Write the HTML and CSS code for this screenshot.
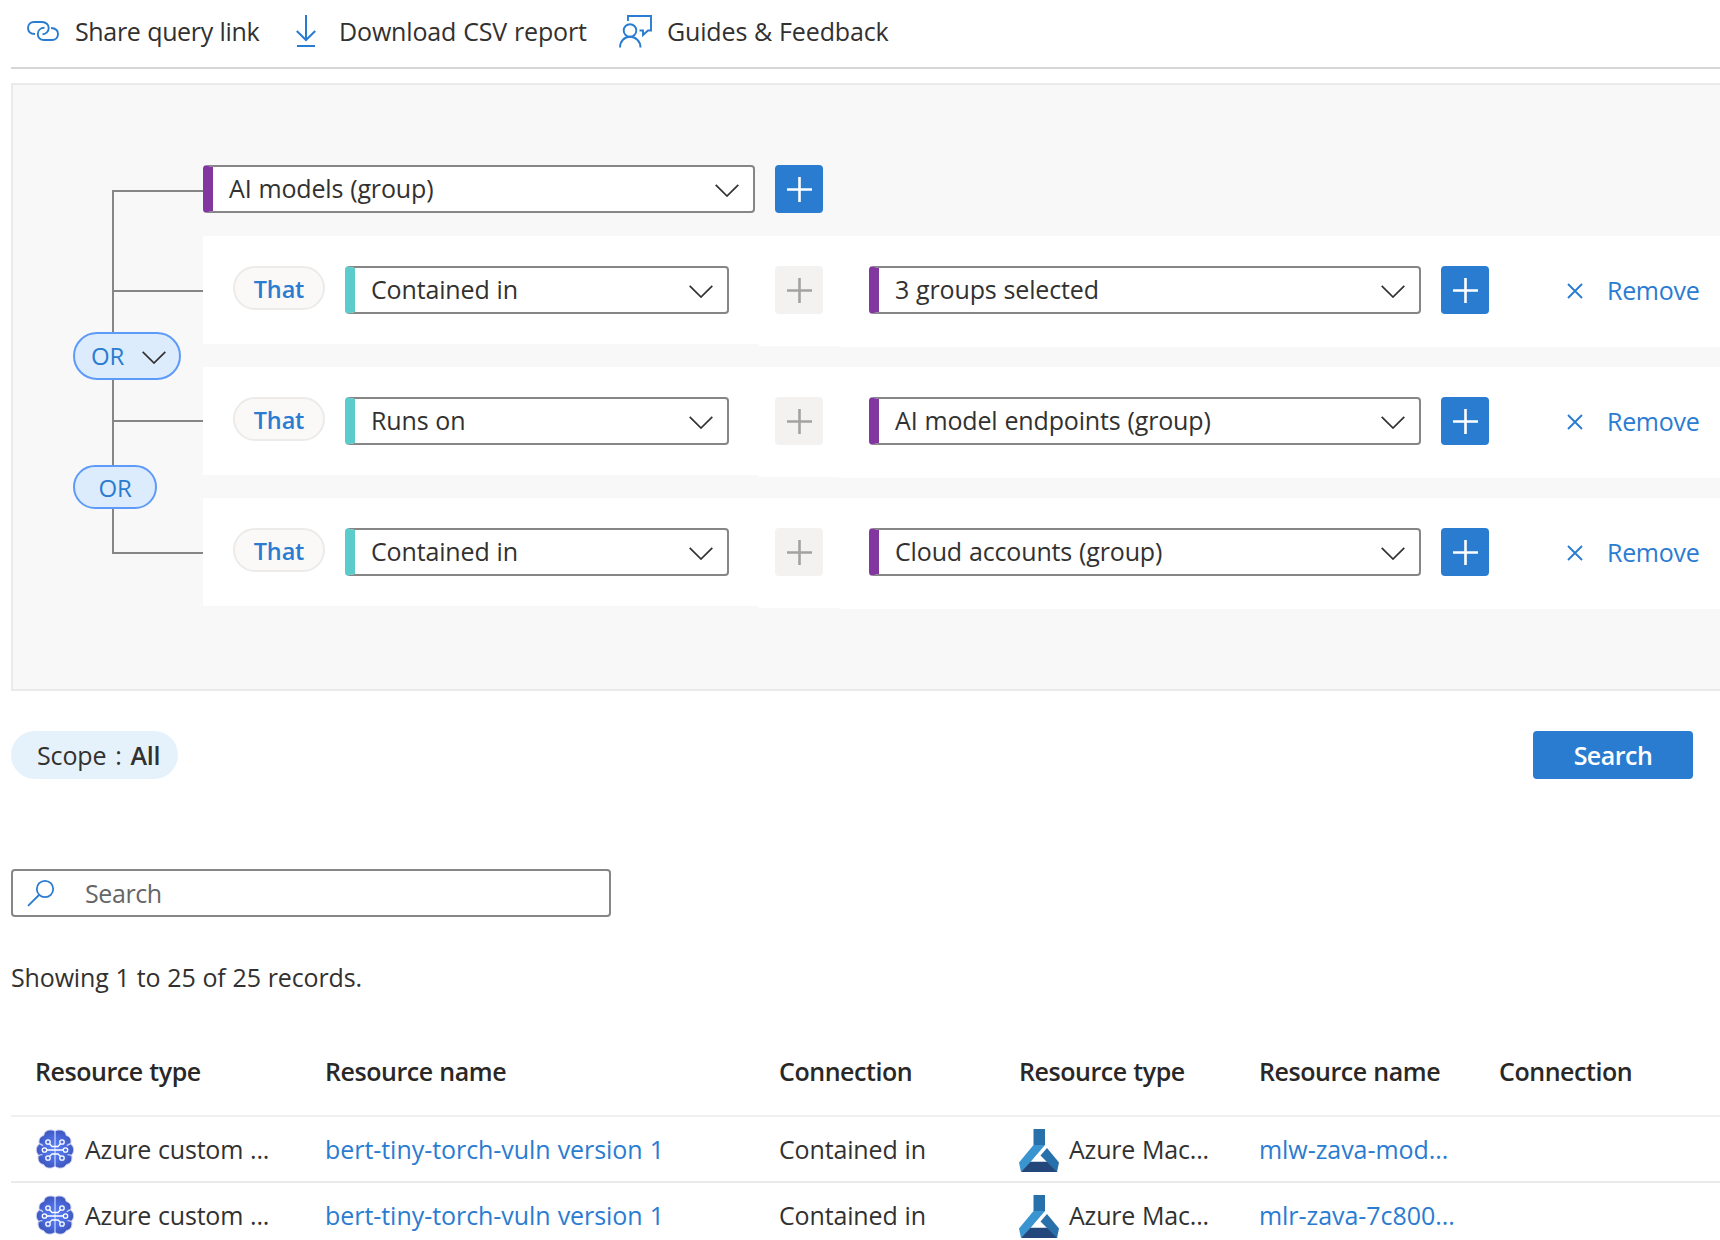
FILE: index.html
```html
<!DOCTYPE html>
<html lang="en">
<head>
    <meta charset="UTF-8">
    <meta name="viewport" content="width=device-width, initial-scale=1.0">
    <title>Cloud Security Explorer</title>
    <link rel="stylesheet" href="styles.css">
</head>
<body>
    <!-- Shared icons -->
    <svg class="sprite" width="0" height="0">
        <defs>
            <radialGradient id="brain-fill" cx="50%" cy="50%" r="60%">
                <stop offset="0" stop-color="#5c80f5"/>
                <stop offset="0.5" stop-color="#4a6be0"/>
                <stop offset="1" stop-color="#3a4fb0"/>
            </radialGradient>
        </defs>
        <symbol id="chevron" viewBox="0 0 24 13">
            <path d="M.7 .9 12 12 23.300 .9" fill="none" stroke="#323130" stroke-width="1.7"/>
        </symbol>
        <symbol id="plus" viewBox="0 0 26 26">
            <path d="M13.500 1V26M1 13.500H26" fill="none" stroke="currentColor" stroke-width="2.600"/>
        </symbol>
        <symbol id="cross" viewBox="0 0 16 16">
            <path d="M1 1 15 15M15 1 1 15" fill="none" stroke="currentColor" stroke-width="1.900"/>
        </symbol>
        <symbol id="brain" viewBox="0 0 40 40">
            <path d="M19 1.500C14 .2 9.500 1.500 8.800 6.500 5 7.500 3 11 4.500 15 .8 17 .3 23 3.500 26 2 31 4.500 35 8.500 35.500 10.500 39.800 17 40 19.300 37.500L20 37.500 20.700 37.500C23 40 29.500 39.800 31.500 35.500 35.500 35 38 31 36.500 26 39.700 23 39.200 17 35.500 15 37 11 35 7.500 31.200 6.500 30.500 1.500 26 .2 21 1.500L20 2.500Z" fill="url(#brain-fill)" stroke="#c9d0ef" stroke-width="1"/>
            <path d="M20 2V38" stroke="#b5c2f7" stroke-width="1.500"/>
            <g fill="none" stroke="#fff" stroke-width="1.300">
                <path d="M11.500 21H28.500M14.500 14.800 17 17.500H23L25.500 14.800M14.500 27.200 17 25H23L25.500 27.200"/>
                <path d="M4.500 15C6 15 7.500 16 8 17M35.500 15C34 15 32.500 16 32 17M3.500 27C5 25.500 6.500 25.500 7.500 26M36.500 27C35 25.500 33.500 25.500 32.500 26" stroke="#c9d0ef"/>
                <circle cx="9.500" cy="21" r="2.200"/><circle cx="30.500" cy="21" r="2.200"/>
                <circle cx="13" cy="13" r="2.200"/><circle cx="27" cy="13" r="2.200"/>
                <circle cx="13" cy="29" r="2.200"/><circle cx="27" cy="29" r="2.200"/>
            </g>
        </symbol>
        <symbol id="flask" viewBox="0 0 40 43">
            <path d="M14.500 0H26V16H14.500Z" fill="#2870aa"/>
            <path d="M10 32.800H30L38.500 43H2Z" fill="#24477b"/>
            <path d="M14.500 16H26L11 33.500 2 43 0 33.500Z" fill="#3a94d0"/>
            <path d="M28 19 40 33.500 38 43 21.500 26.500Z" fill="#2870aa"/>
        </symbol>
    </svg>

    <header class="toolbar">
        <button class="command command-share">
            <svg width="34" height="22" viewBox="0 0 34 22" fill="none" stroke="#2a7cd1" stroke-width="1.900">
                <path d="M9 14C4 13.800 2 11 2 8 2 4.500 4.500 2 8 2H16C20 2 22.700 4.700 22.700 8 22.700 11.500 20 14.200 16.500 14.200"/>
                <path d="M25 8C30 8.200 32 11 32 14 32 17.500 29.500 20 26 20H18C14 20 11.800 17.300 11.800 14 11.800 10.500 14.500 7.800 18.500 7.800"/>
            </svg>
            <span>Share query link</span>
        </button>
        <button class="command command-download">
            <svg width="20" height="32" viewBox="0 0 20 32" fill="none" stroke="#2a7cd1" stroke-width="2">
                <path d="M10 0V25M.8 16 10 25 19.200 16M1 31H19"/>
            </svg>
            <span>Download CSV report</span>
        </button>
        <button class="command command-guides">
            <svg width="33" height="33" viewBox="0 0 33 33" fill="none" stroke="#2a7cd1" stroke-width="1.900">
                <path d="M9 6V1H32V15.500H29L24 20V15.500H20.500"/>
                <circle cx="11" cy="15.500" r="6.300"/>
                <path d="M1 32.500C1 26 5.500 21.800 11 21.800S21.500 26 21.500 32.500"/>
            </svg>
            <span>Guides &amp; Feedback</span>
        </button>
    </header>

    <section class="builder">
        <div class="tree">
            <svg class="tree-lines" width="190" height="400" fill="none" stroke="#868686" stroke-width="2">
                <path d="M190 26H100V388H190M100 126H190M100 256H190"/>
            </svg>
            <button class="operator operator-main">OR <svg width="24" height="13"><use href="#chevron"/></svg></button>
            <div class="operator operator-sub">OR</div>
        </div>

        <div class="query">
            <div class="query-root">
                <button class="select select-wide entity"><span>AI models (group)</span><svg width="24" height="13"><use href="#chevron"/></svg></button>
                <button class="add"><svg width="26" height="26"><use href="#plus"/></svg></button>
            </div>

            <div class="condition">
                <div class="cell cell-relation">
                    <span class="that">That</span>
                    <button class="select select-narrow relation"><span>Contained in</span><svg width="24" height="13"><use href="#chevron"/></svg></button>
                </div>
                <div class="cell cell-add"><button class="add" disabled><svg width="26" height="26"><use href="#plus"/></svg></button></div>
                <div class="cell cell-target">
                    <button class="select select-wide entity"><span>3 groups selected</span><svg width="24" height="13"><use href="#chevron"/></svg></button>
                    <button class="add"><svg width="26" height="26"><use href="#plus"/></svg></button>
                    <a class="remove"><svg width="16" height="16"><use href="#cross"/></svg>Remove</a>
                </div>
            </div>

            <div class="condition">
                <div class="cell cell-relation">
                    <span class="that">That</span>
                    <button class="select select-narrow relation"><span>Runs on</span><svg width="24" height="13"><use href="#chevron"/></svg></button>
                </div>
                <div class="cell cell-add"><button class="add" disabled><svg width="26" height="26"><use href="#plus"/></svg></button></div>
                <div class="cell cell-target">
                    <button class="select select-wide entity"><span>AI model endpoints (group)</span><svg width="24" height="13"><use href="#chevron"/></svg></button>
                    <button class="add"><svg width="26" height="26"><use href="#plus"/></svg></button>
                    <a class="remove"><svg width="16" height="16"><use href="#cross"/></svg>Remove</a>
                </div>
            </div>

            <div class="condition">
                <div class="cell cell-relation">
                    <span class="that">That</span>
                    <button class="select select-narrow relation"><span>Contained in</span><svg width="24" height="13"><use href="#chevron"/></svg></button>
                </div>
                <div class="cell cell-add"><button class="add" disabled><svg width="26" height="26"><use href="#plus"/></svg></button></div>
                <div class="cell cell-target">
                    <button class="select select-wide entity"><span>Cloud accounts (group)</span><svg width="24" height="13"><use href="#chevron"/></svg></button>
                    <button class="add"><svg width="26" height="26"><use href="#plus"/></svg></button>
                    <a class="remove"><svg width="16" height="16"><use href="#cross"/></svg>Remove</a>
                </div>
            </div>
        </div>
    </section>

    <div class="actions">
        <button class="scope">Scope : <b>All</b></button>
        <button class="run">Search</button>
    </div>

    <label class="filter">
        <svg width="28" height="28" viewBox="0 0 28 28" fill="none" stroke="#2a7cd1" stroke-width="1.800">
            <circle cx="18" cy="10" r="8.200"/>
            <path d="M12 16 1 26.800"/>
        </svg>
        <input type="text" placeholder="Search">
    </label>

    <p class="summary">Showing 1 to 25 of 25 records.</p>

    <table class="results">
        <colgroup>
            <col class="col-type"><col class="col-name"><col class="col-std"><col class="col-std"><col class="col-std"><col>
        </colgroup>
        <thead>
            <tr>
                <th>Resource type</th>
                <th>Resource name</th>
                <th>Connection</th>
                <th>Resource type</th>
                <th>Resource name</th>
                <th>Connection</th>
            </tr>
        </thead>
        <tbody>
            <tr>
                <td><div class="resource"><svg width="40" height="40"><use href="#brain"/></svg><span>Azure custom ...</span></div></td>
                <td><a>bert-tiny-torch-vuln version 1</a></td>
                <td>Contained in</td>
                <td><div class="resource"><svg class="flask" width="40" height="43"><use href="#flask"/></svg><span>Azure Mac...</span></div></td>
                <td><a>mlw-zava-mod...</a></td>
                <td></td>
            </tr>
            <tr>
                <td><div class="resource"><svg width="40" height="40"><use href="#brain"/></svg><span>Azure custom ...</span></div></td>
                <td><a>bert-tiny-torch-vuln version 1</a></td>
                <td>Contained in</td>
                <td><div class="resource"><svg class="flask" width="40" height="43"><use href="#flask"/></svg><span>Azure Mac...</span></div></td>
                <td><a>mlr-zava-7c800...</a></td>
                <td></td>
            </tr>
        </tbody>
    </table>
</body>
</html>
```
FILE: styles.css
```css
:root {
    --blue: #2a7cd1;
    --text: #323130;
    --border: #868686;
    --purple: #8236a0;
    --teal: #5bcbcb;
}

* {
    margin: 0;
    padding: 0;
    box-sizing: border-box;
}

body {
    height: 1240px;
    padding-left: 11px;
    overflow: hidden;
    background: #fff;
    color: var(--text);
    font-family: 'Segoe UI', 'Open Sans', 'Noto Sans', sans-serif;
    font-size: 25px;
    line-height: 34px;
    letter-spacing: -0.15px;
    word-spacing: 0.6px;
}

button,
input {
    font: inherit;
    letter-spacing: inherit;
    word-spacing: inherit;
    color: inherit;
    background: none;
    border: none;
}

svg {
    display: block;
    flex-shrink: 0;
}

a {
    color: var(--blue);
}

.sprite {
    position: absolute;
}

/* Toolbar */
.toolbar {
    display: flex;
    height: 69px;
    padding: 0 0 5px 15px;
    border-bottom: 2px solid #d6d6d6;
}

.command {
    display: flex;
    align-items: center;
    white-space: nowrap;
}

.command-share {
    width: 270px;
    gap: 15px;
    letter-spacing: -0.35px;
}

.command-download {
    width: 323px;
    gap: 23px;
}

.command-guides {
    gap: 15px;
}

/* Query builder */
.builder {
    display: flex;
    height: 608px;
    margin-top: 14px;
    padding-top: 80px;
    background: #f8f8f8;
    border: 2px solid #eaeaea;
    border-right: none;
}

.tree {
    position: relative;
    width: 190px;
    flex-shrink: 0;
}

.operator {
    position: absolute;
    left: 60px;
    display: flex;
    align-items: center;
    background: #dcecfc;
    border: 2px solid #5e9bf8;
    border-radius: 24px;
    color: var(--blue);
    font-size: 24px;
}

.operator-main {
    top: 167px;
    width: 108px;
    height: 48px;
    padding: 0 13px 0 16px;
    justify-content: space-between;
}

.operator-main svg {
    margin-top: 3px;
}

.operator-sub {
    top: 300px;
    width: 84px;
    height: 44px;
    padding-top: 2px;
    justify-content: center;
}

.query {
    flex: 1;
}

.query-root {
    display: flex;
    gap: 20px;
    margin-bottom: 23px;
}

.select {
    display: flex;
    align-items: center;
    justify-content: space-between;
    height: 48px;
    padding: 0 14px 0 16px;
    background: #fff;
    border: 2px solid var(--border);
    border-left-width: 10px;
    border-radius: 4px;
}

.select span {
    padding-bottom: 2px;
}

.select svg {
    margin-top: 2px;
}

.select-wide {
    width: 552px;
}

.select-narrow {
    width: 384px;
}

.entity {
    border-left-color: var(--purple);
}

.relation {
    border-left-color: var(--teal);
}

.add {
    display: grid;
    place-items: center;
    width: 48px;
    height: 48px;
    background: var(--blue);
    border-radius: 4px;
    color: #fff;
}

.add:disabled {
    background: #f3f2f1;
    color: #a4a2a0;
}

.condition {
    display: flex;
    align-items: flex-start;
    margin-bottom: 20px;
}

.cell {
    display: flex;
    align-items: flex-start;
    padding-top: 30px;
    background: #fff;
}

.cell-relation {
    width: 556px;
    height: 108px;
    padding-left: 30px;
    gap: 20px;
}

.cell-add {
    width: 80px;
    height: 110px;
    padding-left: 16px;
}

.cell-target {
    flex: 1;
    height: 111px;
    padding-left: 30px;
    gap: 20px;
}

.that {
    display: grid;
    place-items: center;
    width: 92px;
    height: 44px;
    padding-top: 2px;
    background: #faf9f8;
    border: 2px solid #edebe9;
    border-radius: 22px;
    color: var(--blue);
    font-weight: 600;
    font-size: 23.5px;
}

.remove {
    display: flex;
    align-items: center;
    gap: 24px;
    height: 48px;
    margin-left: 58px;
    letter-spacing: -0.3px;
}

.remove svg {
    margin-top: 2px;
}

/* Scope and search */
.actions {
    display: flex;
    justify-content: space-between;
    margin: 40px 27px 90px 0;
}

.scope {
    width: 167px;
    height: 48px;
    padding: 0 0 1px 26px;
    background: #e6f2fb;
    border-radius: 24px;
    text-align: left;
    white-space: nowrap;
    word-spacing: 2.5px;
}

.scope b {
    font-weight: 600;
}

.run {
    width: 160px;
    height: 48px;
    background: var(--blue);
    border-radius: 4px;
    color: #fff;
    font-weight: 600;
    letter-spacing: -0.5px;
}

.filter {
    display: flex;
    align-items: center;
    gap: 30px;
    width: 600px;
    height: 48px;
    padding-left: 14px;
    border: 2px solid var(--border);
    border-radius: 4px;
}

.filter input {
    outline: none;
}

.filter input::placeholder {
    color: #666;
    letter-spacing: -0.4px;
}

.summary {
    margin-top: 43px;
}

/* Results */
.results {
    width: 1709px;
    margin-top: 33px;
    table-layout: fixed;
    border-collapse: separate;
    border-spacing: 0;
}

.col-type {
    width: 290px;
}

.col-name {
    width: 454px;
}

.col-std {
    width: 240px;
}

.results th,
.results td {
    padding-left: 24px;
    text-align: left;
    white-space: nowrap;
    border-bottom: 2px solid #eaeaea;
}

.results th {
    height: 90px;
    font-weight: 600;
    color: #292827;
    border-bottom-color: #f0f0f0;
    letter-spacing: -0.45px;
}

.results td {
    height: 66px;
}

.results td > a {
    letter-spacing: -0.05px;
}

.resource {
    display: flex;
    align-items: center;
    gap: 10px;
    letter-spacing: -0.2px;
}

.flask {
    margin: 2px 0 -1px;
}
```
